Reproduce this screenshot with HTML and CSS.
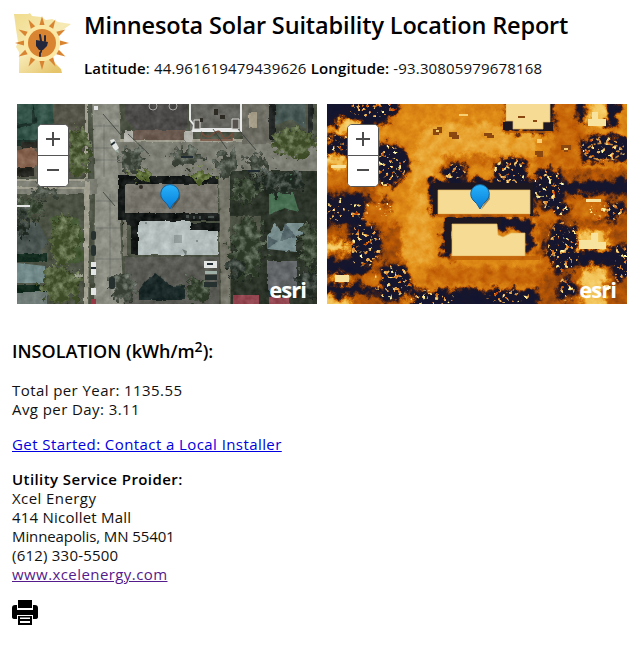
FILE: index.html
```html
<!DOCTYPE html>
<html lang="en">
<head>
<meta charset="utf-8">
<title>Minnesota Solar Suitability Location Report</title>
<link rel="stylesheet" href="styles.css">
</head>
<body>
<header class="header">
  <svg class="logo" viewBox="0 0 58 62">
    <defs>
      <linearGradient id="state" x2="0.7" y2="1"><stop stop-color="#f0dc8d"/><stop offset=".55" stop-color="#f7eab5"/><stop offset="1" stop-color="#e5c46a"/></linearGradient>
      <path id="ray" d="M25.5 12 28 3 30.5 12Z"/>
    </defs>
    <path fill="url(#state)" d="M0 1H14L16 0 18 3 27 4 32 7 38 6 44 9 57 11 50 16 42 24 37 31 38 38 36 43 41 50 47 56 48 60H5V39L2 34 4 29 2 16Z"/>
    <circle cx="28" cy="30" r="18" fill="#fbe8a5"/>
    <g fill="#d98431">
      <use href="#ray"/><use href="#ray" transform="rotate(30 28 30)"/><use href="#ray" transform="rotate(60 28 30)"/><use href="#ray" transform="rotate(90 28 30)"/><use href="#ray" transform="rotate(120 28 30)"/><use href="#ray" transform="rotate(150 28 30)"/><use href="#ray" transform="rotate(180 28 30)"/><use href="#ray" transform="rotate(210 28 30)"/><use href="#ray" transform="rotate(240 28 30)"/><use href="#ray" transform="rotate(270 28 30)"/><use href="#ray" transform="rotate(300 28 30)"/><use href="#ray" transform="rotate(330 28 30)"/>
      <circle cx="28" cy="30" r="14"/>
    </g>
    <g fill="none" stroke="#24273c" stroke-linecap="round"><path stroke-width="2" d="M26 22 27 28M31 23 31 28"/><path stroke-width="1.8" d="M27 35Q28 38 26 40V43"/></g>
    <path fill="#24273c" d="M22 27 34 29 33 33 29 37H25L22 33Z"/>
  </svg>
  <div class="heading">
    <h1>Minnesota Solar Suitability Location Report</h1>
    <p class="coords"><b>Latitude</b>: 44.961619479439626 <b>Longitude:</b> -93.30805979678168</p>
  </div>
</header>

<main>
<section class="maps">
  <div class="map">
    <svg class="imagery" viewBox="0 0 300 200">
      <defs>
        <filter id="ground" filterUnits="userSpaceOnUse" x="-12" y="-12" width="324" height="224" color-interpolation-filters="sRGB">
          <feTurbulence type="fractalNoise" baseFrequency=".13" numOctaves="3" seed="4" result="n"/>
          <feDisplacementMap in="SourceGraphic" in2="n" scale="3" xChannelSelector="R" yChannelSelector="G" result="d"/>
          <feColorMatrix in="n" values=".8 0 0 0 .1 .8 0 0 0 .1 .8 0 0 0 .1 0 0 0 0 1" result="g"/>
          <feComposite in="d" in2="g" operator="arithmetic" k2="1" k3=".25" k4="-.13"/><feGaussianBlur stdDeviation=".35"/>
        </filter>
        <filter id="trees" x="-10%" y="-10%" width="120%" height="120%" color-interpolation-filters="sRGB">
          <feTurbulence type="fractalNoise" baseFrequency=".14" numOctaves="4" seed="8" result="n"/>
          <feDisplacementMap in="SourceGraphic" in2="n" scale="24" xChannelSelector="R" yChannelSelector="G" result="d"/>
          <feColorMatrix in="n" values="0 1.3 0 0 -.5 0 1.3 0 0 -.5 0 1.3 0 0 -.5 0 0 0 0 1" result="g"/>
          <feComposite in="d" in2="g" operator="arithmetic" k2="1" k3=".5" k4="-.06" result="t"/>
          <feComposite in="t" in2="d" operator="in"/><feGaussianBlur stdDeviation=".6"/>
        </filter>
      </defs>
      <g filter="url(#ground)">
        <path fill="#4e5445" d="M-20-20H320V220H-20Z"/>
        <path fill="#8e9085" d="M75-9H102L105 72 103 116 107 209H77L78 90Z"/>
        <path fill="#7e8075" d="M98 38H309V70L260 72H102ZM-9 75H80V90H-9Z"/>
        <path fill="#a09f90" d="M68-9H71V75H-9V77H73L71 209H67V85H-9V83H68ZM103 35H225V38H103Z"/>
        <path fill="#57564a" d="M-9-9H68V73H-9Z"/>
        <path fill="#36564c" d="M-9 2 16-9H36V31L25 36H-9Z"/><path fill="#20362f" d="M15 0 20 19-9 27V22L15 18ZM-9 36H28V42H-9Z"/>
        <path fill="#866450" d="M-9 48 16 43 24 54 17 64H-9Z"/><path fill="#292a24" d="M5 38H23V44H5ZM-9 64H17V72H-9Z"/>
        <path fill="#4d4b4a" d="M108-9H170V26H120L108 14Z"/><path fill="#6c5b51" d="M107 26H169V36H107Z"/><path fill="#b0b0a9" d="M107 26H116V38H107ZM167 27H176V38H167Z"/>
        <path fill="#686863" d="M173-9H225V27H173Z"/>
        <path fill="#6d6d64" d="M225-9H254V40H225Z"/><path fill="#272c2b" d="M252-9H258V35H252ZM291-9H296V32H291Z"/><path fill="#495a57" d="M258-9H289V25L274 15 259 21Z"/>
        <path fill="#a69d88" d="M232 8H240V24H232Z"/>
        <path fill="#181d1b" d="M101 72H201V80H108V116H101ZM108 109H205V117H173V127H205V119H122V150H114V121H105Z"/>
        <path fill="#7a786f" d="M108 80H201V109H108Z"/><path fill="#75736a" d="M114 88H198V104H114Z"/>
        <path fill="#b4bebd" d="M121 117H173V126H201V151H121Z"/>
        <path fill="#5a5b54" d="M108 153H202V209H108Z"/><path fill="#77766a" d="M202 72H213V209H204ZM106 116H110V152H106Z"/>
        <path fill="#2e352b" d="M213 67H309V112H213ZM244 112H309V209H214V132H244Z"/>
        <path fill="#4a7054" d="M252 88H276L282 108 267 104 252 111ZM252 70H275V81H252Z"/>
        <path fill="#798f90" d="M250 133 258 119 264 127 270 119H287V130L279 132 279 148 250 145Z"/><path fill="#55676a" d="M268 119 279 133 263 137ZM251 133 261 137 250 145Z"/>
        <path fill="#65686a" d="M250 157H280V186H250Z"/><path fill="#929185" d="M282 170H309V174H282Z"/>
        <path fill="#4b5552" d="M-9 117 22 119 31 138 24 150H-9Z"/><path fill="#152d20" d="M-9 150H30V158H-9ZM-9 181H30V188H-9Z"/>
        <path fill="#758c8c" d="M-9 158 28 162V179H-9Z"/><path fill="#717d78" d="M-9 188H30V209H-9Z"/><path fill="#949987" d="M30 170H66V173H30Z"/>
        <path fill="#465a35" d="M34 112 61 114 66 130V157L49 160 38 145Z"/>
        <path fill="#1d2c2b" d="M128 178 138 169 155 182 168 181V196H122V186Z"/>
        <path fill="#934550" d="M216 191H242V209H216ZM252 193H273V209H252Z"/>
      </g>
      <g filter="url(#trees)">
        <g fill="#4c5935"><ellipse cx="60" cy="48" rx="13" ry="24"/><ellipse cx="47" cy="136" rx="14" ry="25"/><ellipse cx="43" cy="181" rx="20" ry="18"/><ellipse cx="277" cy="39" rx="22" ry="15"/></g>
        <g fill="#3b4735"><ellipse cx="229" cy="86" rx="14" ry="13"/><ellipse cx="230" cy="144" rx="16" ry="32"/><ellipse cx="12" cy="105" rx="16" ry="10"/><ellipse cx="293" cy="142" rx="9" ry="24"/><ellipse cx="180" cy="186" rx="13" ry="13"/></g>
        <g fill="#464d43"><ellipse cx="169" cy="52" rx="15" ry="9"/><ellipse cx="114" cy="56" rx="11" ry="12"/><ellipse cx="208" cy="59" rx="10" ry="14"/><ellipse cx="240" cy="62" rx="11" ry="12"/><ellipse cx="106" cy="183" rx="13" ry="15"/><ellipse cx="27" cy="88" rx="13" ry="7"/></g>
        <g fill="#5b6b36"><ellipse cx="184" cy="72" rx="12" ry="7"/><ellipse cx="125" cy="71" rx="8" ry="6"/></g>
        <g fill="#2c362e"><ellipse cx="265" cy="78" rx="24" ry="11"/><ellipse cx="219" cy="164" rx="8" ry="11"/><ellipse cx="292" cy="179" rx="11" ry="15"/><ellipse cx="5" cy="118" rx="5" ry="14"/></g>
      </g>
      <path fill="none" stroke="#e7e9e8" stroke-width="2" d="M173 0V16L177 21 176 27H224V0M177 25H222"/><path fill="#56524e" stroke="#d8d8d3" d="M177 16H183V25H177ZM215 15H222V25H215Z"/>
      <path fill="none" stroke="#754e3e" stroke-width="1.5" d="M185 29Q190 36 196 30T205 31T215 30V36H184Z"/>
      <g fill="#2d2923"><path d="M197 5h4v6h-4zM183 14h3v4h-3zM203 11h5v4h-5z"/><circle cx="124" cy="83" r="2"/></g>
      <g fill="none" stroke="#a9a7a2"><circle cx="136" cy="2" r="4"/><circle cx="156" cy="2" r="4"/></g>
      <g stroke="#353d39" stroke-width=".8"><path d="M86 10 104 31M111 30 132 50M196 25 210 45M221 25 239 46M86 88 98 102"/><path stroke-opacity=".35" d="M76 22H102M76 44H103M78 56H103M79 97H105M79 124H105M79 155H106M87 20V73M93 90V195"/></g>
      <g fill="#26312f"><rect x="74" y="127" width="5" height="9" rx="2"/><rect x="74" y="141" width="5" height="11" rx="2"/><rect x="92" y="173" width="6" height="12" rx="2"/><rect x="188" y="171" width="12" height="5"/><rect x="187" y="178" width="13" height="5"/></g>
      <g fill="#e3e6e5"><path d="M93 36 97 35 102 44 99 47 96 44ZM74 158h5v13h-5ZM74 184h5v7h-5ZM187 157h13v7h-13ZM77 2h4v4h-4ZM0 101h13v2H0Z"/></g><path stroke="#202a31" stroke-width="2" d="M94 41 98 38M74 164h5M190 160h6M164 53h12M231 67h12"/><path fill="#9eb0a7" d="M188 167h12v3h-12zM98 47l3-2 1 4z"/><path fill="#983644" d="M74 195h5v5h-5z"/>
      <g class="roof-marks"><circle cx="129" cy="119" r="1"/><circle cx="180" cy="137" r="1"/><path opacity=".5" d="M157 131h8v8h-8z"/><path d="M165 145l5 2-1 5zM169 111h3v3h-3zM176 112h2v3h-2zM182 112h2v3h-2zM191 112h6v2h-6z"/></g>
    </svg>
    <div class="zoom"><button type="button" aria-label="Zoom in"><svg viewBox="0 0 16 16"><path d="M8 1V15M1 8H15"/></svg></button><button type="button" aria-label="Zoom out"><svg viewBox="0 0 16 16"><path d="M2 8H14"/></svg></button></div>
    <svg class="pin" viewBox="0 0 24 30"><defs><linearGradient id="blue" x2="0" y2="1"><stop stop-color="#28b3fb"/><stop offset="1" stop-color="#067bd5"/></linearGradient></defs><path fill="#222" opacity=".45" d="M13 27 22 16 21 10Z"/><path fill="url(#blue)" stroke="#176299" d="M12 26Q9 20 5 17A9.3 9.3 0 1 1 19 17Q15 20 12 26Z"/></svg>
    <span class="esri">esri</span>
  </div>
  <div class="map">
    <svg class="imagery" viewBox="0 0 300 200">
      <defs>
        <filter id="heat" filterUnits="userSpaceOnUse" x="-25" y="-25" width="350" height="250" color-interpolation-filters="sRGB">
          <feTurbulence type="fractalNoise" baseFrequency=".11" numOctaves="4" seed="12" result="n"/>
          <feGaussianBlur in="SourceGraphic" stdDeviation="2" result="b"/>
          <feDisplacementMap in="b" in2="n" scale="16" xChannelSelector="R" yChannelSelector="G" result="d"/>
          <feColorMatrix in="n" values="0 0 1 0 0 0 0 1 0 0 0 0 1 0 0 0 0 0 0 1" result="g"/>
          <feComposite in="d" in2="g" operator="arithmetic" k2="1" k3=".18" k4="-.09"/>
          <feComponentTransfer><feFuncR type="table" tableValues=".07 .1 .35 .75 .89 .96 1"/><feFuncG type="table" tableValues=".08 .09 .16 .36 .57 .79 .95"/><feFuncB type="table" tableValues=".19 .17 .08 .02 .1 .38 .7"/></feComponentTransfer>
        </filter>
        <filter id="specks" x="0" y="0" width="100%" height="100%" color-interpolation-filters="sRGB">
          <feTurbulence type="fractalNoise" baseFrequency=".24" numOctaves="2" seed="21"/>
          <feColorMatrix values="0 .5 0 0 .65 0 1.6 0 0 -.15 0 1.6 0 0 -.5 14 0 0 0 -8.1" result="s"/>
          <feComposite in="s" in2="SourceAlpha" operator="in"/>
        </filter>
        <g id="canopy"><ellipse cx="46" cy="5" rx="24" ry="8"/><ellipse cx="60" cy="61" rx="19" ry="21"/><ellipse cx="12" cy="39" rx="14" ry="8"/><ellipse cx="9" cy="105" rx="9" ry="13"/><ellipse cx="32" cy="106" rx="11" ry="10"/><ellipse cx="57" cy="103" rx="8" ry="9"/><ellipse cx="37" cy="141" rx="17" ry="22"/><ellipse cx="66" cy="178" rx="19" ry="18"/><ellipse cx="105" cy="194" rx="22" ry="8"/><ellipse cx="128" cy="68" rx="11" ry="8"/><ellipse cx="184" cy="68" rx="17" ry="14"/><ellipse cx="222" cy="83" rx="15" ry="18"/><ellipse cx="277" cy="45" rx="23" ry="12"/><ellipse cx="229" cy="105" rx="12" ry="7"/><ellipse cx="236" cy="143" rx="17" ry="25"/><ellipse cx="280" cy="107" rx="18" ry="10"/><ellipse cx="240" cy="185" rx="9" ry="12"/><ellipse cx="180" cy="192" rx="22" ry="7"/><ellipse cx="294" cy="160" rx="8" ry="20"/></g>
      </defs>
      <g filter="url(#heat)">
        <path fill="#a2a2a2" d="M-40-40H340V240H-40Z"/>
        <path fill="#b8b8b8" d="M95 20H210V55H115L105 78H90V145H85V65Z"/><path fill="#b5b5b5" d="M84 90H105V158H75Z"/>
        <path fill="#777" d="M-30 65H50V120H-30ZM210 65H330V230H210ZM-30 120H75V230H-30Z"/><path fill="#8a8a8a" d="M225-30H258V62H225ZM115 52H255V61H115ZM100 163H213V180H100Z"/>
        <path fill="#111" d="M-30-30H70V0L66 14 47 23H-30ZM-30 38H22V52H-30ZM48 40H72L85 60 79 67H52ZM-30 91H35L60 105 45 123-30 119ZM-30 156H42V169H-30ZM-30 181H86V190H-30ZM85 186H210V230H85ZM251-30H258V18H251ZM281-30H291V22H281ZM255 33H330V57H255ZM255 76H330V90H245L210 98V86ZM250 146H330V160H250Z"/>
        <g fill="#161616"><use href="#canopy"/></g>
        <path fill="#8d8d8d" d="M-30 66H30V83H-30ZM38 98H63V119H38ZM36 166H56V185H36ZM244 91H280V114H244ZM210 107H230V118H210ZM210 153H226V166H210Z"/>
        <path fill="#d5d5d5" d="M9 15H34V28H9ZM-30 51H20V64H-30ZM-30 137H20V149H-30ZM7 170H22V179H7ZM-30 194H24V230H-30ZM251 126H282V146H251ZM255 164H278V230H255ZM263-30H278V22H263Z"/>
        <path fill="#151515" d="M104 76H208V112H203V86H112V110H104ZM118 113H202V125H118ZM117 114H126V152H117ZM177-30H226V28H177ZM196 122H205V150H196Z"/>
      </g>
      <g filter="url(#specks)"><use href="#canopy"/></g>
      <path fill="#1d1721" d="M106 79H206V112H203V86H111V110H106ZM118 114H174V121H124V148H118ZM176 18H185V26H176ZM216 18H226V27H216Z"/>
      <g class="warm-roof"><path d="M111 86H203V110H111ZM179-2H223V18H216V25H186V17H179ZM125 120H170L171 131 176 133 184 129H198V152H125Z"/></g>
      <path fill="#bc5c07" opacity=".75" d="M111 110H203V113H111ZM123 152H213V156H123ZM178 27H224V29H178Z"/>
      <g fill="#8a4710"><path d="M106 25h4v-2h5v6h-3v2h-6zM122 28h8v3h2v4h-7v-2h-3zM157 29h8v2h2v3h-7v-2h-3zM234 41h10v5h-3v2h-4v-2h-3zM208 47h8v6h-6v-2h-2zM191 12h7v2h-7zM206 16h4v2h-4z"/></g><g fill="#f8ce72"><path d="M109 26h3v2h-3zM210 35h5v4h-5zM237 44h4v2h-4zM132 10h9v2h-9zM277 181h5v5h-5z"/></g>
      <g fill="#f8e39e"><path d="M261 15h18v7h-18zM265 8h6v8h-6zM252 136h12v-7h7v9h8v7h-27zM8 171h14v7H8zM4 61h15v3H4zM259 95h15v3h-15z"/></g>
      <path fill="none" stroke="#c98a3e" stroke-width="1.6" stroke-dasharray="2 2 4 3" d="M258 47Q265 37 282 40T294 50Q285 58 270 55T258 47Z"/>
    </svg>
    <div class="zoom"><button type="button" aria-label="Zoom in"><svg viewBox="0 0 16 16"><path d="M8 1V15M1 8H15"/></svg></button><button type="button" aria-label="Zoom out"><svg viewBox="0 0 16 16"><path d="M2 8H14"/></svg></button></div>
    <svg class="pin" viewBox="0 0 24 30"><path fill="#222" opacity=".45" d="M13 27 22 16 21 10Z"/><path fill="url(#blue)" stroke="#176299" d="M12 26Q9 20 5 17A9.3 9.3 0 1 1 19 17Q15 20 12 26Z"/></svg>
    <span class="esri">esri</span>
  </div>
</section>

<section class="details">
  <h3>INSOLATION (kWh/m<sup>2</sup>):</h3>
  <p class="wide">Total per Year: 1135.55<br>Avg per Day: 3.11</p>
  <p class="wide"><a href="#">Get Started: Contact a Local Installer</a></p>
  <p class="utility"><b class="wide">Utility Service Proider:</b><br><span class="wide">Xcel Energy</span><br>414 Nicollet Mall<br><span class="city">Minneapolis, MN 55401</span><br>(612) 330-5500<br><a class="visited wide" href="#">www.xcelenergy.com</a></p>
  <svg class="printer" viewBox="0 0 26 25"><path d="M6 0H20V8H6ZM3 5H5V10H21V5H23Q26 5 26 8V17Q26 19 23 19H21V15H5V19H3Q0 19 0 17V8Q0 5 3 5Z"/><path fill-rule="evenodd" d="M6 16H20V25H6ZM8 17.5V19H18V17.5ZM8 21V23H18V21Z"/></svg>
</section>
</main>
</body>
</html>
```
FILE: styles.css
```css
body { margin: 0; background: #fff; color: #111; font: 15px/19px "Open Sans", sans-serif; }
.header { display: flex; padding: 13px 0 0 14px; height: 91px; box-sizing: border-box; }
.logo { width: 58px; height: 62px; margin-right: 12px; flex: none; }
.heading { white-space: nowrap; }
h1 { margin: -4px 0 0; font-size: 23.5px; line-height: 32px; font-weight: 600; letter-spacing: -.14px; color: #000; }
.coords { margin: 18px 0 0; letter-spacing: .165px; }
b { font-weight: 600; color: #000; }
.maps { display: flex; gap: 10px; padding: 13px 0 0 17px; }
.map { position: relative; width: 300px; height: 200px; overflow: hidden; flex: none; }
.imagery { display: block; width: 300px; height: 200px; }
.roof-marks { fill: #59635f; opacity: .7; }
.warm-roof { fill: #f5db94; stroke: #e6b862; stroke-width: .7; }
.zoom { position: absolute; left: 20px; top: 20px; width: 32px; height: 63px; box-sizing: border-box; border: 1px solid #555; border-radius: 5px; overflow: hidden; display: flex; flex-direction: column; background: #fff; }
.zoom button { flex: 1; display: grid; place-items: center; padding: 0 0 2px; border: 0; background: #fff; }
.zoom button + button { border-top: 1px solid #555; }
.zoom svg { width: 16px; height: 16px; fill: none; stroke: #4c4c4c; stroke-width: 2; }
.pin { position: absolute; left: 141px; top: 79px; width: 24px; height: 30px; }
.esri { position: absolute; right: 11px; bottom: 3px; color: #fff; font-size: 22px; line-height: 24px; font-weight: 700; letter-spacing: -1px; }
.details { padding: 35px 12px 0; }
h3 { margin: 0; font-size: 18px; line-height: 25px; font-weight: 600; color: #000; }
sup { font-size: 14px; line-height: 0; vertical-align: 6px; }
p { margin: 16px 0; }
.details h3 + p { margin-top: 17px; }
.wide { letter-spacing: .42px; }
.utility { letter-spacing: .22px; }
.city { letter-spacing: -.1px; }
a { color: #0000e0; }
.visited { color: #551a8b; }
.printer { display: block; width: 26px; height: 25px; }
```
